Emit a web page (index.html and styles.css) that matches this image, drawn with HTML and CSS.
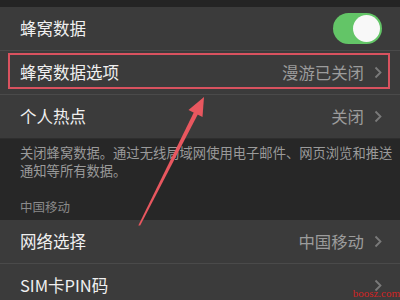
FILE: index.html
```html
<!DOCTYPE html>
<html lang="zh">
<head>
<meta charset="utf-8">
<link rel="stylesheet" href="styles.css">
</head>
<body>
<div class="screen">
  <div class="topstrip"></div>
  <div class="group">
    <div class="row">
      <span class="title">蜂窝数据</span>
      <span class="toggle"><span class="knob"></span></span>
    </div>
    <div class="sep"></div>
    <div class="row row-hl">
      <span class="title">蜂窝数据选项</span>
      <span class="right"><span class="value">漫游已关闭</span><svg class="chev" width="8" height="13" viewBox="0 0 8 13"><polyline points="1.5,1.5 6.5,6.5 1.5,11.5" fill="none" stroke="#7a7a7a" stroke-width="1.8"/></svg></span>
      <span class="hlbox"></span>
    </div>
    <div class="sep"></div>
    <div class="row">
      <span class="title">个人热点</span>
      <span class="right"><span class="value">关闭</span><svg class="chev" width="8" height="13" viewBox="0 0 8 13"><polyline points="1.5,1.5 6.5,6.5 1.5,11.5" fill="none" stroke="#7a7a7a" stroke-width="1.8"/></svg></span>
    </div>
  </div>
  <div class="desc">
    <p class="note">关闭蜂窝数据。通过无线局域网使用电子邮件、网页浏览和推送</p>
    <p class="note">通知等所有数据。</p>
    <p class="header">中国移动</p>
  </div>
  <div class="group">
    <div class="row">
      <span class="title">网络选择</span>
      <span class="right"><span class="value">中国移动</span><svg class="chev" width="8" height="13" viewBox="0 0 8 13"><polyline points="1.5,1.5 6.5,6.5 1.5,11.5" fill="none" stroke="#7a7a7a" stroke-width="1.8"/></svg></span>
    </div>
    <div class="sep"></div>
    <div class="row">
      <span class="title">SIM卡PIN码</span>
      <span class="right"><svg class="chev" width="8" height="13" viewBox="0 0 8 13"><polyline points="1.5,1.5 6.5,6.5 1.5,11.5" fill="none" stroke="#7a7a7a" stroke-width="1.8"/></svg></span>
    </div>
  </div>
  <svg class="arrow" width="400" height="300" viewBox="0 0 400 300">
    <polygon points="138.3,225.4 140.2,225.6 198.0,114.0 194.0,112.0" fill="#e8575f"/>
    <polygon points="204,97 202.5,117 188.5,110" fill="#e8575f"/>
  </svg>
  <span class="watermark">boosz.com</span>
</div>
</body>
</html>
```
FILE: styles.css
```css
html, body {
  margin: 0;
  padding: 0;
  background: #262626;
}
.screen {
  position: relative;
  width: 400px;
  height: 300px;
  overflow: hidden;
  font-family: "Noto Sans CJK SC", "Noto Sans", sans-serif;
}
.topstrip {
  height: 7px;
  background: #242424;
}
.group {
  background: #3b3b3b;
}
.row {
  position: relative;
  height: 43px;
  display: flex;
  align-items: center;
  justify-content: space-between;
  padding: 0 18px 0 20px;
}
.sep {
  height: 1px;
  background: #4a4a4a;
}
.title {
  font-size: 16.5px;
  color: #f0f0f0;
  line-height: 1;
}
.right {
  display: flex;
  align-items: center;
  gap: 10px;
}
.value {
  font-size: 16.4px;
  color: #9c9c9c;
  line-height: 1;
}
.chev {
  display: block;
}
.toggle {
  width: 49px;
  height: 31px;
  border-radius: 16px;
  background: #63c567;
  display: flex;
  align-items: center;
  justify-content: flex-end;
  padding: 2px;
  box-sizing: border-box;
}
.knob {
  width: 27px;
  height: 27px;
  border-radius: 50%;
  background: #f8f8f8;
}
.hlbox {
  position: absolute;
  left: 8px;
  right: 10px;
  top: 2px;
  height: 36px;
  border: 2.5px solid #d9525f;
  box-sizing: border-box;
}
.desc {
  background: #272727;
  padding: 5px 4px 5px 20px;
  border-top: 1px solid #2e2e2e;
}
.note {
  margin: 0;
  font-size: 13.3px;
  line-height: 18px;
  color: #9a9a9a;
  white-space: nowrap;
}
.header {
  margin: 18px 0 0 0;
  font-size: 12.5px;
  line-height: 17px;
  color: #8a8a8a;
}
.arrow {
  position: absolute;
  left: 0;
  top: 0;
}
.watermark {
  position: absolute;
  right: 0;
  bottom: 1px;
  font-family: "Liberation Serif", serif;
  font-size: 11px;
  color: #d02424;
  line-height: 1;
}
```
